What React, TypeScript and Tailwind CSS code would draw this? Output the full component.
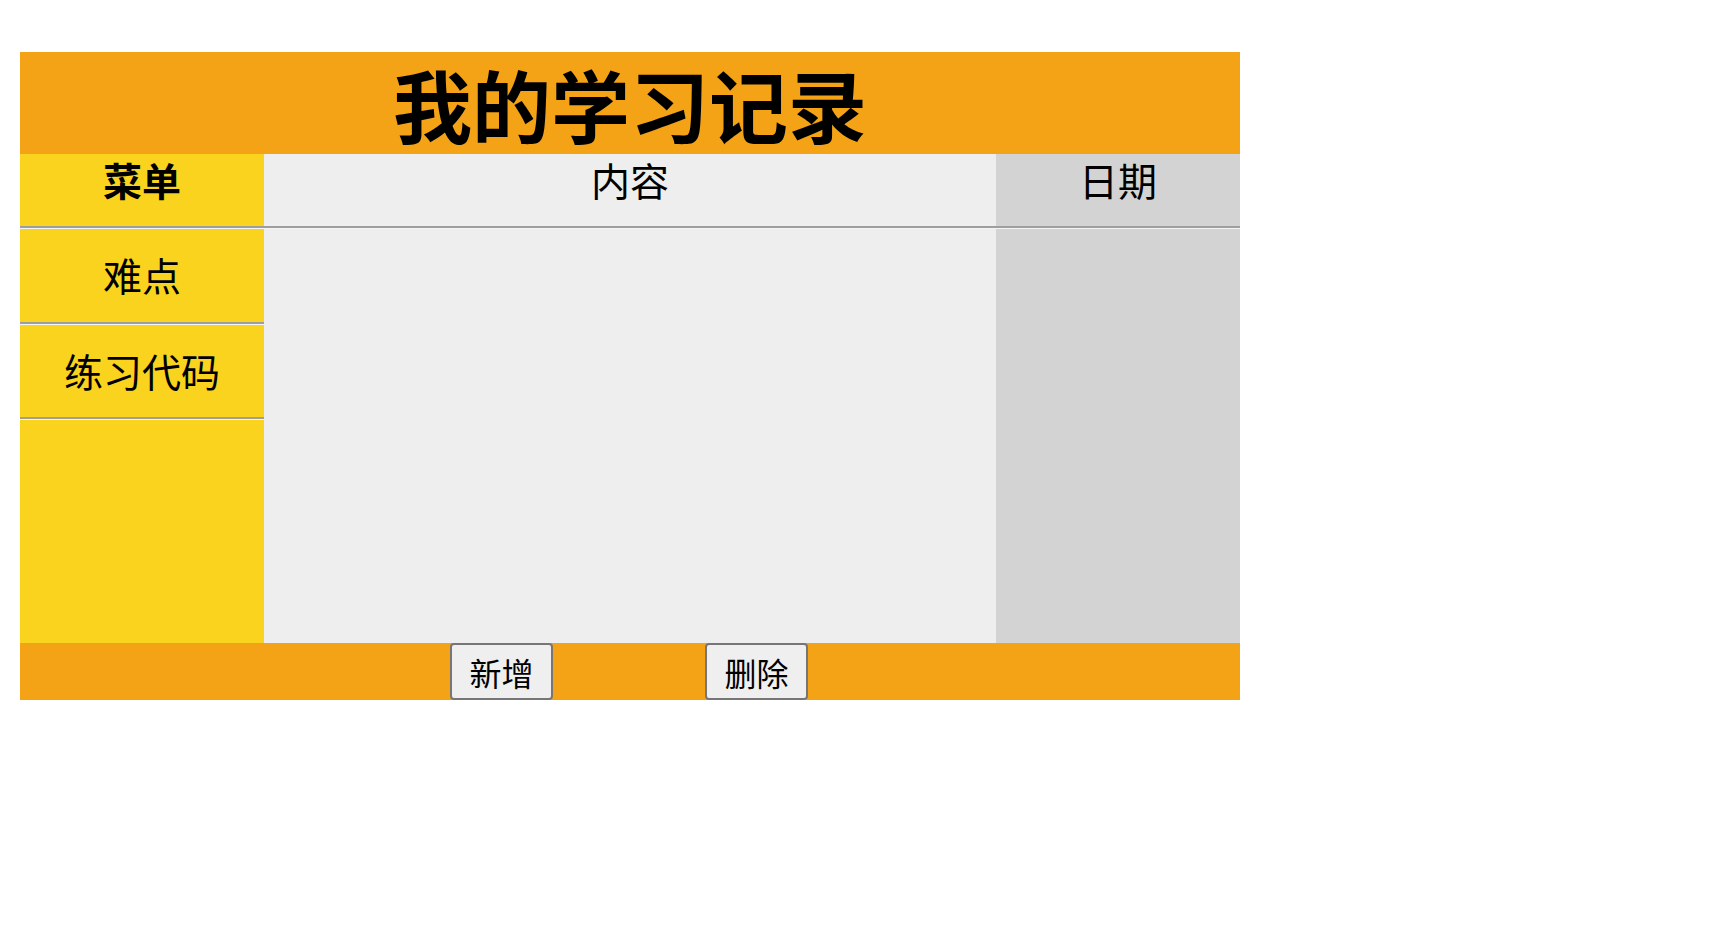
export default function App() {
  const font = { fontFamily: '"Noto Sans CJK SC", "Noto Sans", sans-serif' };

  const Divider = () => (
    <div className="h-[3px] border-t-2 border-b border-t-[#9e9e9e] border-b-[#f4f4f4]" />
  );

  return (
    <div className="bg-white min-h-[927px] pt-[52px] pl-[20px] text-black" style={font}>
      <div className="w-[1220px] flex flex-col">
        <header className="h-[102px] bg-[#f5a316] flex items-center justify-center">
          <h1 className="text-[79px] font-bold leading-[98px] mt-[2px]">我的学习记录</h1>
        </header>

        <main className="h-[489px] flex">
          {/* 菜单 */}
          <section className="w-[244px] bg-[#f9d31d] flex flex-col">
            <div className="h-[72px] flex justify-center pt-[2px]">
              <h2 className="text-[39px] font-bold leading-[46px]">菜单</h2>
            </div>
            <Divider />
            <div className="h-[93px] flex items-center justify-center text-[39px] pb-[2px]">难点</div>
            <Divider />
            <div className="h-[92px] flex items-center justify-center text-[39px] pb-[2px]">练习代码</div>
            <Divider />
          </section>

          {/* 内容 */}
          <section className="w-[732px] bg-[#eeeeee] flex flex-col">
            <div className="h-[72px] flex justify-center pt-[2px]">
              <h2 className="text-[39px] leading-[46px]">内容</h2>
            </div>
            <Divider />
          </section>

          {/* 日期 */}
          <section className="w-[244px] bg-[#d3d3d3] flex flex-col">
            <div className="h-[72px] flex justify-center pt-[2px]">
              <h2 className="text-[39px] leading-[46px]">日期</h2>
            </div>
            <Divider />
          </section>
        </main>

        <footer className="h-[57px] bg-[#f5a316] flex items-stretch pl-[430px] gap-[152px]">
          <button className="w-[103px] h-[57px] bg-[#efefef] border-2 border-[#767676] rounded-[4px] text-[32px] leading-none">
            新增
          </button>
          <button className="w-[103px] h-[57px] bg-[#efefef] border-2 border-[#767676] rounded-[4px] text-[32px] leading-none">
            删除
          </button>
        </footer>
      </div>
    </div>
  );
}
